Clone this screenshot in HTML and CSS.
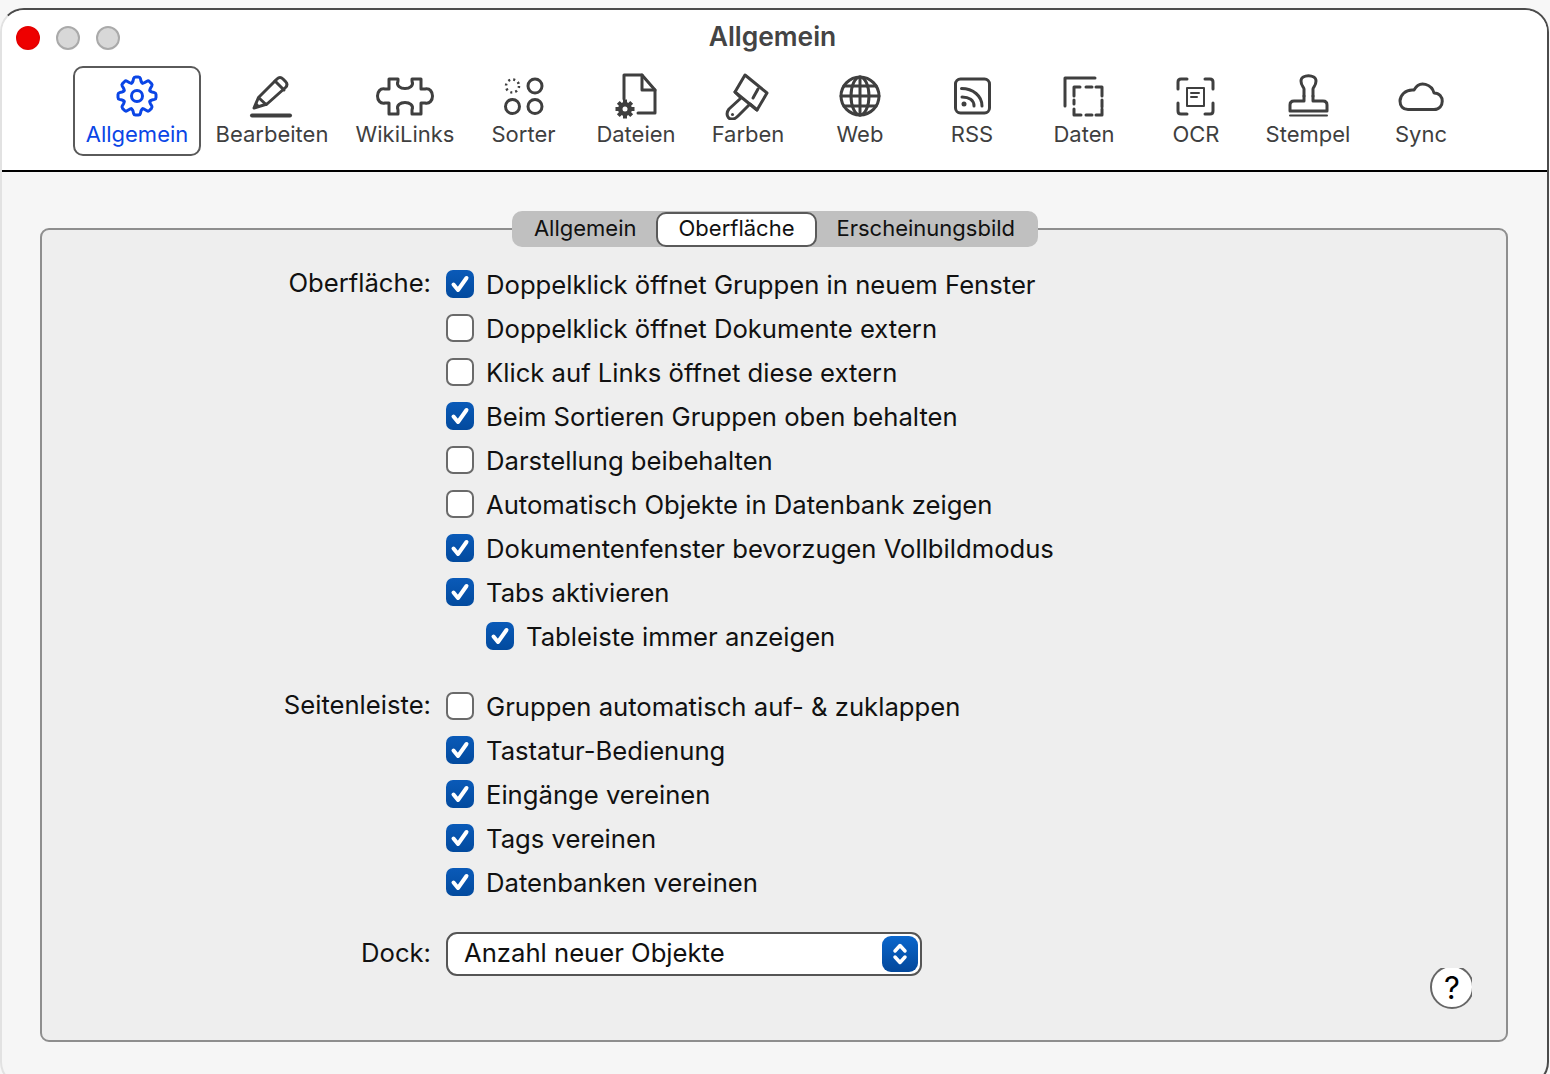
FILE: index.html
```html
<!DOCTYPE html>
<html lang="de">
<head>
<meta charset="utf-8">
<title>Allgemein</title>
<link rel="stylesheet" href="styles.css">
</head>
<body>
<div class="window">
  <header class="titlebar">
    <div class="lights"><span class="light close"></span><span class="light"></span><span class="light"></span></div>
    <div class="title">Allgemein</div>
    <div></div>
  </header>
  <nav class="toolbar">
    <div class="tool active">
      <svg class="icon" viewBox="-30 -24 60 48"><g id="t"><path d="M-5.36-12.93Q-4.400-13.500-4-15L-3.400-17.500Q-3-19-1.500-19H1.500Q3-19 3.400-17.500L4-15Q4.400-13.500 5.360-12.930"/></g><use href="#t" transform="rotate(45)"/><use href="#t" transform="rotate(90)"/><use href="#t" transform="rotate(135)"/><use href="#t" transform="rotate(180)"/><use href="#t" transform="rotate(225)"/><use href="#t" transform="rotate(270)"/><use href="#t" transform="rotate(315)"/><circle r="5.500"/></svg>
      <span>Allgemein</span>
    </div>
    <div class="tool">
      <svg class="icon" viewBox="242 72 60 48"><path d="M254 108L258.500 97.500L277 79Q280 76 283 79L285.500 81.500Q288.500 84.500 285.500 87.500L267 104Z"/><path d="M275 81L284 90M259 98L266 104.500"/><path class="fill" d="M253 109L256 102L260 106Z"/><path class="thick" d="M252 115.500H290"/></svg>
      <span>Bearbeiten</span>
    </div>
    <div class="tool">
      <svg class="icon" viewBox="375 72 60 48"><path d="M389 79H398V81C394 91 416 91 412 81V79H421V89H425C435 87 435 105 425 103H421V114H412V110C416 100 394 100 398 110V114H389V103H385C375 105 375 87 385 89H389Z"/></svg>
      <span>WikiLinks</span>
    </div>
    <div class="tool">
      <svg class="icon" viewBox="494 72 60 48"><circle class="dots" cx="512.500" cy="86" r="6.500"/><circle cx="535" cy="86" r="7"/><circle cx="512.500" cy="106.500" r="7"/><circle cx="535" cy="106.500" r="7"/></svg>
      <span>Sorter</span>
    </div>
    <div class="tool">
      <svg class="icon" viewBox="606 72 60 48"><path d="M624 99V75H642L655 90V113H638"/><path d="M642 75V90H655"/><path class="cog" d="M625 99.500V118.500M615.500 109H634.500M618.300 102.300L631.700 115.700M631.700 102.300L618.300 115.700"/><circle class="fill" cx="625" cy="109" r="7"/><circle class="hole" cx="625" cy="109" r="2.500"/></svg>
      <span>Dateien</span>
    </div>
    <div class="tool">
      <svg class="icon" viewBox="718 72 60 48"><path d="M745 75L767 93L757 110L750 104L738 116C736 118 735 119 733 119C728 120 725 114 729 109L741 98L735 92Z"/><path d="M735 92L757 110M758 89L753 98"/><circle class="fill" cx="732.500" cy="114.500" r="1.500"/></svg>
      <span>Farben</span>
    </div>
    <div class="tool">
      <svg class="icon" viewBox="830 72 60 48"><circle cx="860" cy="96" r="19"/><ellipse cx="860" cy="96" rx="9" ry="19"/><path d="M860 77V115M841 96H879M844 86H876M844 106H876"/></svg>
      <span>Web</span>
    </div>
    <div class="tool">
      <svg class="icon" viewBox="942 72 60 48"><rect x="955.500" y="79" width="34" height="34" rx="5"/><path d="M962 97C969 97 974 100 974 106M961.500 88.500C973 88.500 982 96 982 106"/><circle class="fill" cx="964" cy="104" r="2.500"/></svg>
      <span>RSS</span>
    </div>
    <div class="tool">
      <svg class="icon" viewBox="1054 72 60 48"><path d="M1065 106V78H1095"/><path d="M1074 96V87H1080M1086 87H1092M1096 87H1102V96M1102 100V107M1102 109V115H1096M1092 115H1086M1081 115H1074V109M1074 104V100"/></svg>
      <span>Daten</span>
    </div>
    <div class="tool">
      <svg class="icon" viewBox="1166 72 60 48"><path d="M1178 89V82Q1178 79 1181 79H1187M1205 79H1210Q1213 79 1213 82V89M1213 103V111Q1213 114 1210 114H1205M1187 114H1181Q1178 114 1178 111V103"/><rect class="thin" x="1187" y="88" width="17" height="18"/><path class="thin" d="M1191 93H1199M1191 97H1197"/></svg>
      <span>OCR</span>
    </div>
    <div class="tool">
      <svg class="icon" viewBox="1278 72 60 48"><path d="M1304 96V89C1304 87 1301 86 1301 81C1301 74 1316 74 1316 81C1316 86 1313 87 1313 89V96"/><path d="M1304 96V101H1294Q1290 101 1290 105V111H1327V105Q1327 101 1323 101H1313V96"/><path class="thin" d="M1290 115.500H1327"/></svg>
      <span>Stempel</span>
    </div>
    <div class="tool">
      <svg class="icon" viewBox="1391 72 60 48"><path d="M1408 109.500H1434C1445 109.500 1445 93 1434 93C1432 85 1420 79 1414 90C1405 89 1400 96 1400 101C1400 106 1403 109.500 1408 109.500Z"/></svg>
      <span>Sync</span>
    </div>
  </nav>
  <main class="content">
    <div class="tabs">
      <span class="tab">Allgemein</span>
      <span class="tab selected">Oberfläche</span>
      <span class="tab">Erscheinungsbild</span>
    </div>
    <section class="group">
      <div class="section">
        <div class="label">Oberfläche:</div>
        <div class="rows">
          <div class="row"><span class="box on"><svg viewBox="0 0 28 28"><path d="M7.500 14.500L12 20L20.500 8"/></svg></span>Doppelklick öffnet Gruppen in neuem Fenster</div>
          <div class="row"><span class="box"></span>Doppelklick öffnet Dokumente extern</div>
          <div class="row"><span class="box"></span>Klick auf Links öffnet diese extern</div>
          <div class="row"><span class="box on"><svg viewBox="0 0 28 28"><path d="M7.500 14.500L12 20L20.500 8"/></svg></span>Beim Sortieren Gruppen oben behalten</div>
          <div class="row"><span class="box"></span>Darstellung beibehalten</div>
          <div class="row"><span class="box"></span>Automatisch Objekte in Datenbank zeigen</div>
          <div class="row"><span class="box on"><svg viewBox="0 0 28 28"><path d="M7.500 14.500L12 20L20.500 8"/></svg></span>Dokumentenfenster bevorzugen Vollbildmodus</div>
          <div class="row"><span class="box on"><svg viewBox="0 0 28 28"><path d="M7.500 14.500L12 20L20.500 8"/></svg></span>Tabs aktivieren</div>
          <div class="row nested"><span class="box on"><svg viewBox="0 0 28 28"><path d="M7.500 14.500L12 20L20.500 8"/></svg></span>Tableiste immer anzeigen</div>
        </div>
      </div>
      <div class="section">
        <div class="label">Seitenleiste:</div>
        <div class="rows">
          <div class="row"><span class="box"></span>Gruppen automatisch auf- &amp; zuklappen</div>
          <div class="row"><span class="box on"><svg viewBox="0 0 28 28"><path d="M7.500 14.500L12 20L20.500 8"/></svg></span>Tastatur-Bedienung</div>
          <div class="row"><span class="box on"><svg viewBox="0 0 28 28"><path d="M7.500 14.500L12 20L20.500 8"/></svg></span>Eingänge vereinen</div>
          <div class="row"><span class="box on"><svg viewBox="0 0 28 28"><path d="M7.500 14.500L12 20L20.500 8"/></svg></span>Tags vereinen</div>
          <div class="row"><span class="box on"><svg viewBox="0 0 28 28"><path d="M7.500 14.500L12 20L20.500 8"/></svg></span>Datenbanken vereinen</div>
        </div>
      </div>
      <div class="section dock">
        <div class="label">Dock:</div>
        <div class="select">
          <span class="value">Anzahl neuer Objekte</span>
          <span class="stepper"><svg viewBox="0 0 36 36"><path d="M13 15L18 9.500L23 15M13 21L18 26.500L23 21"/></svg></span>
        </div>
        <div class="help"><span class="help-circle">?</span></div>
      </div>
    </section>
  </main>
</div>
</body>
</html>
```
FILE: styles.css
```css
* { box-sizing: border-box; }
html, body { margin: 0; height: 1074px; overflow: hidden; }
body {
  background: #f7f7f7;
  font-family: Inter, "Liberation Sans", sans-serif;
  color: #111;
}
.window {
  margin-top: 8px;
  height: 1078px;
  width: 1549px;
  background: #f6f6f6;
  border: 2px solid #4b4b4b;
  border-left-color: #e2e2e2;
  border-radius: 24px;
  overflow: hidden;
}
.titlebar {
  height: 56px;
  background: #fff;
  display: grid;
  grid-template-columns: 1fr auto 1fr;
  padding: 0 18px 0 14px;
  align-items: center;
}
.lights { display: flex; gap: 16px; }
.light {
  width: 24px;
  height: 24px;
  border-radius: 50%;
  background: #d8d8d8;
  border: 2px solid #aaa;
}
.light.close { background: #ee0000; border-color: #e60000; }
.title {
  font-size: 26.400px;
  font-weight: 600;
  color: #444;
  margin-top: -4px;
}
.toolbar {
  background: #fff;
  height: 106px;
  padding-left: 71px;
  border-bottom: 2px solid #000;
  display: grid;
  grid-template-columns: 128px 142px 124px 113px repeat(7, 112px) 114px;
  align-items: start;
}
.tool {
  height: 90px;
  border: 2px solid transparent;
  border-radius: 10px;
  padding-top: 4px;
  display: flex;
  flex-direction: column;
  align-items: center;
  color: #3f3f3f;
  font-size: 22px;
  line-height: 28px;
  white-space: nowrap;
}
.tool.active { border-color: #5a5a5a; color: #0a45e6; }
.icon {
  width: 60px;
  height: 48px;
  display: block;
  fill: none;
  stroke: currentColor;
  stroke-width: 3;
  stroke-linejoin: round;
  stroke-linecap: round;
}
.icon .fill { fill: currentColor; stroke: none; }
.icon .hole { fill: #fff; stroke: none; }
.icon .thick { stroke-width: 4; }
.icon .thin { stroke-width: 2; }
.icon .dots { stroke-width: 2.500; stroke-dasharray: 2 3.100; stroke-linecap: butt; }
.icon .cog { stroke-width: 4; stroke-linecap: butt; }
.content {
  padding: 39px 39px 0 38px;
  display: flex;
  flex-direction: column;
  align-items: center;
}
.tabs {
  position: relative;
  z-index: 1;
  height: 36px;
  background: #c0c0c0;
  border-radius: 10px;
  display: flex;
  align-items: center;
  padding: 0 23px 2px 22px;
  font-size: 22px;
  margin: 0 0 -19px 2px;
  color: #111;
}
.tab { white-space: nowrap; }
.tab.selected {
  background: #fff;
  height: 35px;
  line-height: 29px;
  border: 2px solid #5a5a5a;
  border-radius: 10px;
  padding: 0 20px 0 21px;
  margin: 2px 20px 0 19px;
}
.group {
  width: 100%;
  height: 814px;
  background: #eeeeee;
  border: 2px solid #8e8e8e;
  border-radius: 9px;
  padding-top: 33px;
  font-size: 25.650px;
}
.section {
  display: flex;
  margin-bottom: 26px;
}
.label {
  width: 389px;
  margin-right: 15px;
  flex: none;
  text-align: right;
  height: 40px;
  line-height: 40px;
  white-space: nowrap;
}
.row {
  height: 44px;
  padding-bottom: 2px;
  display: flex;
  align-items: center;
  gap: 12px;
  white-space: nowrap;
}
.row.nested { padding-left: 40px; }
.box {
  width: 28px;
  height: 28px;
  flex: none;
  background: #fff;
  border: 2px solid #6a6a6a;
  border-radius: 7px;
}
.box.on {
  border: none;
  background: linear-gradient(#0a5ab8, #024a9e);
}
.box svg, .stepper svg {
  display: block;
  fill: none;
  stroke: #fff;
  stroke-width: 4;
  stroke-linecap: round;
  stroke-linejoin: round;
}
.section.dock { margin-bottom: 0; height: 44px; align-items: flex-start; padding-top: 1px; }
.dock .label { line-height: 42px; }
.select {
  width: 476px;
  height: 44px;
  flex: none;
  background: #fff;
  border: 2px solid #555;
  border-radius: 11px;
  display: flex;
  align-items: center;
  justify-content: space-between;
  padding: 0 2px 0 16px;
}
.value { margin-bottom: 3px; }
.stepper {
  width: 36px;
  height: 36px;
  border-radius: 9px;
  background: linear-gradient(#0a66cc, #03489b);
}
.stepper svg { width: 36px; height: 36px; stroke-width: 3.500; }
.help {
  flex: none;
  width: 42px;
  height: 41px;
  margin: 36px 0 0 508px;
  overflow: hidden;
}
.help-circle {
  display: block;
  width: 44px;
  height: 44px;
  margin-top: -3px;
  background: #fff;
  border: 2px solid #666;
  border-radius: 50%;
  text-align: center;
  line-height: 41px;
  font-size: 31px;
  font-weight: 400;
  color: #000;
}
```
